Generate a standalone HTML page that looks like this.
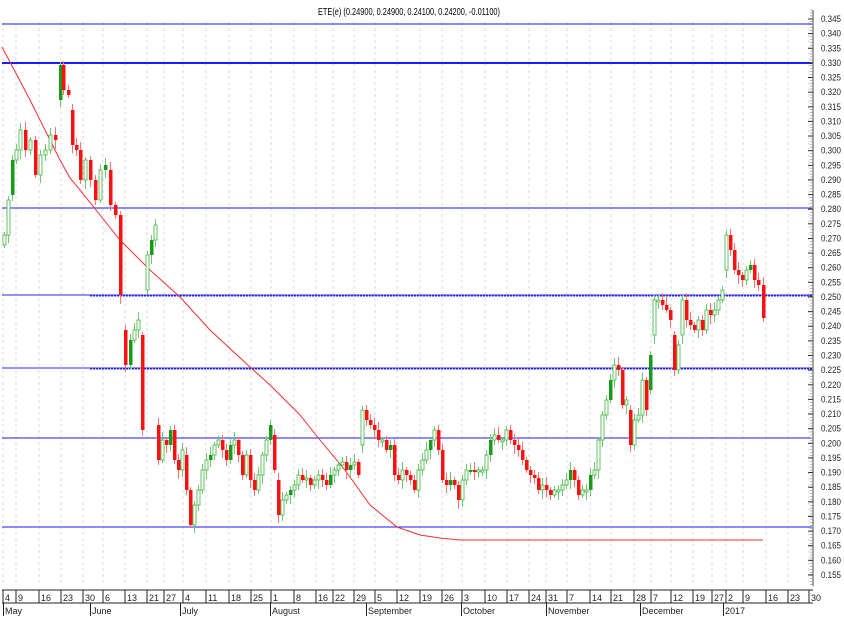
<!DOCTYPE html><html><head><meta charset="utf-8"><style>
html,body{margin:0;padding:0;background:#fff;}
svg{display:block;font-family:"Liberation Sans Narrow","Liberation Sans",sans-serif;}
</style></head><body>
<svg id="c" width="844" height="620" xmlns="http://www.w3.org/2000/svg">
<text x="318" y="15" font-size="10" fill="#000" textLength="182" lengthAdjust="spacingAndGlyphs">ETE(e) (0.24900, 0.24900, 0.24100, 0.24200, -0.01100)</text>
</svg>
<script>
var s=document.getElementById('c'),h='';
var dates=[[4,'4'],[17,'9'],[40,'16'],[62,'23'],[84,'30'],[104,'6'],[126,'13'],[148,'21'],[165,'27'],[184,'4'],[207,'11'],[230,'18'],[252,'25'],[272,'1'],[295,'8'],[317,'16'],[334,'22'],[355,'29'],[376,'5'],[398,'12'],[421,'19'],[443,'26'],[463,'3'],[486,'10'],[508,'17'],[530,'24'],[547,'31'],[568,'7'],[591,'14'],[612,'21'],[635,'28'],[652,'7'],[672,'12'],[694,'19'],[713,'27'],[727,'2'],[744,'9'],[767,'16'],[789,'23'],[810,'30']];
dates.forEach(function(d){h+='<line x1="'+(d[0]-1)+'" y1="22" x2="'+(d[0]-1)+'" y2="586" stroke="#ddd" stroke-dasharray="3,3"/>';});
[[24,1],[63,2],[208,1],[438,1],[527,1]].forEach(function(b){h+='<line x1="2" y1="'+b[0]+'" x2="812" y2="'+b[0]+'" stroke="#1a1aff" stroke-width="'+b[1]+'"/>';});
[295,368].forEach(function(y){h+='<line x1="2" y1="'+y+'" x2="812" y2="'+y+'" stroke="#2a2aff" stroke-width="1"/><line x1="90" y1="'+(y+1)+'" x2="812" y2="'+(y+1)+'" stroke="#2020c0" stroke-width="1" stroke-dasharray="2,1"/>';});
h+='<polyline fill="none" stroke="#f03030" stroke-width="1" points="2,47 10,62 30,100 45,130 60,160 70,178 80,190 100,215 120,240 150,270 180,297 210,330 250,367 270,385 300,415 320,440 345,470 370,505 397,527 420,535 440,538 460,540 763,540"/>';
var p=[[4,235],[8,200],[12,160],[16,150],[20,130],[25,150],[30,140],[35,175],[40,155],[45,150],[50,135],[55,140],[60,65],[63,90],[68,95],[72,145],[76,150],[80,180],[85,160],[90,180],[95,200],[100,170],[105,165],[110,205],[115,215],[120,295],[125,365],[130,340],[134,330],[138,320],[142,430],[147,255],[151,240],[155,225],[158,460],[162,440],[166,445],[170,430],[174,460],[178,470],[182,450],[186,490],[190,525],[194,505],[198,490],[202,470],[206,460],[210,455],[214,445],[218,440],[222,450],[226,460],[230,445],[234,440],[238,455],[242,475],[246,455],[250,480],[254,490],[258,475],[262,455],[266,440],[270,425],[274,470],[278,515],[282,500],[286,495],[290,490],[294,485],[298,475],[302,480],[306,478],[310,485],[314,480],[318,475],[322,480],[326,485],[330,475],[334,470],[338,465],[342,462],[346,470],[350,465],[354,462],[358,475],[362,410],[366,420],[370,425],[374,430],[378,440],[382,440],[386,450],[390,445],[394,475],[398,480],[402,470],[406,475],[410,480],[414,490],[418,470],[422,460],[426,450],[430,440],[434,430],[438,450],[442,480],[446,485],[450,480],[454,485],[458,500],[462,480],[466,470],[470,470],[474,472],[478,470],[482,470],[486,455],[490,440],[494,435],[498,440],[502,440],[506,430],[510,440],[514,445],[518,450],[522,460],[526,470],[530,475],[534,478],[538,490],[542,485],[546,490],[550,495],[554,490],[558,490],[562,485],[566,480],[570,470],[574,480],[578,495],[582,490],[586,490],[590,475],[594,470],[598,440],[602,415],[606,400],[610,380],[614,365],[618,370],[622,405],[626,400],[630,445],[634,420],[638,415],[642,380],[646,410],[650,355],[654,300],[658,300],[662,305],[666,310],[670,320],[674,370],[678,345],[682,300],[686,320],[690,325],[694,330],[698,320],[702,330],[706,310],[710,315],[714,310],[718,300],[722,290],[726,235],[730,250],[734,270],[738,275],[742,280],[746,270],[750,265],[754,280],[758,285],[763,318]];
var prev=p[0][1]+10;
p.forEach(function(c,i){var x=c[0],cl=c[1],op=prev;var d=op-cl;
var lim=(x==120||x==142||x==190)?95:35;
if(d>lim)op=cl+lim;if(d<-lim)op=cl-lim;
if(Math.abs(op-cl)<2)op=cl+2;var up=cl<op;var t=Math.min(op,cl),b=Math.max(op,cl);var wt=t-3-(i*7%6),wb=b+3+(i*5%7);
var col=up?'#3cb43c':'#ff1010';
h+='<line x1="'+(x+0.5)+'" y1="'+wt+'" x2="'+(x+0.5)+'" y2="'+wb+'" stroke="'+(up?'#70c870':'#ff7070')+'"/>';
if(up){if(i%5==2)h+='<rect x="'+(x-1)+'" y="'+t+'" width="3.5" height="'+(b-t)+'" fill="#1a9a1a"/>';else h+='<rect x="'+(x-1)+'" y="'+t+'" width="3" height="'+(b-t)+'" fill="#fff" stroke="'+col+'" stroke-width="0.8"/>';}
else h+='<rect x="'+(x-1)+'" y="'+t+'" width="3.5" height="'+(b-t)+'" fill="'+col+'"/>';
prev=cl;});
h+='<line x1="813" y1="10" x2="813" y2="586" stroke="#444"/>';
for(var y=10;y<=586;y+=2.93)h+='<line x1="810" y1="'+y.toFixed(1)+'" x2="813" y2="'+y.toFixed(1)+'" stroke="#888" stroke-width="0.6"/>';
for(var i=0;i<=38;i++){var yy=19+i*14.63;var v=(0.345-i*0.005).toFixed(3);h+='<line x1="808" y1="'+yy.toFixed(1)+'" x2="813" y2="'+yy.toFixed(1)+'" stroke="#333"/><text x="821" y="'+(yy+3).toFixed(1)+'" font-size="9" fill="#222" textLength="20" lengthAdjust="spacingAndGlyphs">'+v+'</text>';}
h+='<line x1="2" y1="590" x2="813" y2="590" stroke="#222"/><line x1="2" y1="603" x2="813" y2="603" stroke="#222"/>';
dates.forEach(function(d){h+='<line x1="'+(d[0]-1)+'" y1="590" x2="'+(d[0]-1)+'" y2="603" stroke="#222"/><text x="'+(d[0]+1)+'" y="601" font-size="9" fill="#222">'+d[1]+'</text>';});
[[3,'May'],[90,'June'],[180,'July'],[270,'August'],[366,'September'],[461,'October'],[546,'November'],[640,'December'],[723,'2017']].forEach(function(m){h+='<line x1="'+(m[0]+0.5)+'" y1="603" x2="'+(m[0]+0.5)+'" y2="616" stroke="#222"/><text x="'+(m[0]+2)+'" y="614" font-size="9" fill="#222">'+m[1]+'</text>';});
s.innerHTML+=h;
</script>
</body></html>
